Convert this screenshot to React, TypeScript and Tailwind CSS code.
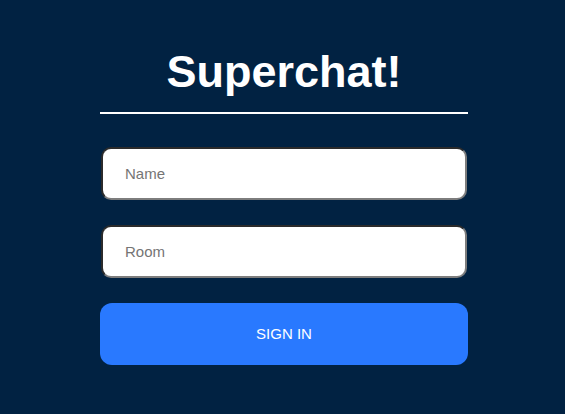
import { useState } from 'react'

export default function App() {
  const [name, setName] = useState('')
  const [room, setRoom] = useState('')

  return (
    <div className="min-h-[414px] w-full bg-[#012242] font-['Liberation_Sans',Arial,sans-serif]">
      <div className="ml-[100px] flex w-[368px] flex-col pt-[47px]">
        <h1 className="border-b-2 border-white pb-[15px] text-center text-[45px] font-bold leading-[50px] text-white">
          Superchat!
        </h1>

        <input
          value={name}
          onChange={(e) => setName(e.target.value)}
          placeholder="Name"
          className="mx-[1px] mt-[33px] h-[53px] rounded-[10px] border-2 border-b-[#7d7d7d] border-l-[#2b2b2b] border-r-[#7d7d7d] border-t-[#2b2b2b] bg-white px-[22px] text-[15px] text-[#333] outline-none placeholder:text-[#757575]"
        />
        <input
          value={room}
          onChange={(e) => setRoom(e.target.value)}
          placeholder="Room"
          className="mx-[1px] mt-[25px] h-[53px] rounded-[10px] border-2 border-b-[#7d7d7d] border-l-[#2b2b2b] border-r-[#7d7d7d] border-t-[#2b2b2b] bg-white px-[22px] text-[15px] text-[#333] outline-none placeholder:text-[#757575]"
        />

        <button className="mt-[25px] h-[62px] rounded-[12px] bg-[#2979ff] text-[15px] text-white">
          SIGN IN
        </button>
      </div>
    </div>
  )
}
